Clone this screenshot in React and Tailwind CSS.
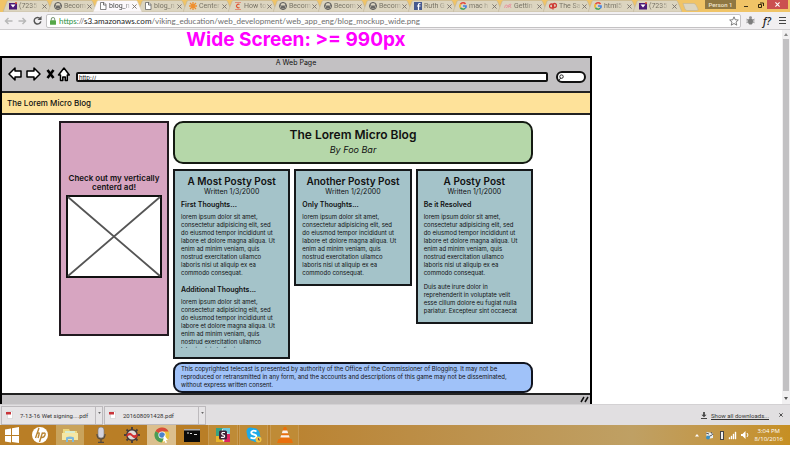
import React from "react";

const TABS = [
  { icon: "mail", label: "(7235" },
  { icon: "wp", label: "Becom" },
  { icon: "doc", label: "blog_n", active: true },
  { icon: "doc", label: "blog_n" },
  { icon: "star", label: "Center" },
  { icon: "c", label: "How to" },
  { icon: "wp", label: "Becom" },
  { icon: "wp", label: "Becom" },
  { icon: "wp", label: "Becom" },
  { icon: "fb", label: "Ruth G" },
  { icon: "g", label: "mac h" },
  { icon: "pink", label: "Gettin" },
  { icon: "red", label: "The Sa" },
  { icon: "g", label: "html5" },
  { icon: "mail", label: "(7235" },
];

const LOREM = [
  "lorem ipsum dolor sit amet,",
  "consectetur adipisicing elit, sed",
  "do eiusmod tempor incididunt ut",
  "labore et dolore magna aliqua. Ut",
  "enim ad minim veniam, quis",
  "nostrud exercitation ullamco",
  "laboris nisi ut aliquip ex ea",
  "commodo consequat.",
];

const DUIS = [
  "Duis aute irure dolor in",
  "reprehenderit in voluptate velit",
  "esse cillum dolore eu fugiat nulla",
  "pariatur. Excepteur sint occaecat",
];

function TabIcon({ kind }) {
  const p = { viewBox: "0 0 16 16", className: "h-2 w-2 shrink-0", "aria-hidden": true };
  switch (kind) {
    case "mail":
      return (
        <svg {...p}>
          <rect y="2" width="16" height="13" fill="#4b1a78" />
          <path d="M3 5h10l-5 6z" fill="#fff" />
          <circle cx="14" cy="2" r="2" fill="#e04b30" />
        </svg>
      );
    case "wp":
      return (
        <svg {...p}>
          <circle cx="8" cy="8" r="7" fill="#ddd6c4" stroke="#555" strokeWidth="2" />
          <path d="M3 5l3 8 2-6 2 6 3-8" fill="none" stroke="#555" strokeWidth="2" />
        </svg>
      );
    case "doc":
      return (
        <svg {...p}>
          <path d="M3 1h7l4 4v10H3z" fill="#fff" stroke="#666" strokeWidth="1.6" />
          <path d="M9 1v5h5" fill="none" stroke="#555" strokeWidth="1.6" />
        </svg>
      );
    case "star":
      return (
        <svg {...p}>
          <path d="M8 0v16M0 8h16M2 2l12 12M14 2L2 14" stroke="#ef8f2e" strokeWidth="2.6" />
        </svg>
      );
    case "c":
      return (
        <svg {...p}>
          <path d="M2 1h12M2 15h12" stroke="#e0705a" strokeWidth="1.4" />
          <path d="M11 5a4 3.5 0 1 0 0 6" fill="none" stroke="#e0502f" strokeWidth="2.4" />
        </svg>
      );
    case "fb":
      return (
        <svg {...p}>
          <rect width="16" height="16" fill="#46598f" />
          <path d="M13 3h-2q-2 0-2 2v11M6 8h7" fill="none" stroke="#fff" strokeWidth="2.4" />
        </svg>
      );
    case "g":
      return (
        <svg {...p} fill="none" strokeWidth="3">
          <path d="M13 4A6.200 6.200 0 0 0 3 4.500" stroke="#e2483b" />
          <path d="M3 4.500a6.200 6.200 0 0 0 0 7" stroke="#f0b51c" />
          <path d="M3 11.500a6.200 6.200 0 0 0 9.500 1" stroke="#3fa456" />
          <path d="M12.500 12.500Q14.500 11 14.200 8H8" stroke="#4680e0" />
        </svg>
      );
    case "pink":
      return (
        <svg {...p}>
          <path d="M1 12Q2 4 6 6t-2 6M8 12q1-9 5-8t-3 5q4-1 4 3" fill="none" stroke="#e69aa2" strokeWidth="2" />
        </svg>
      );
    default:
      return (
        <svg {...p} fill="none" stroke="#cf3b35" strokeWidth="2.6">
          <circle cx="5" cy="8" r="4" />
          <circle cx="11" cy="7" r="4" />
          <path d="M8 6v9" />
        </svg>
      );
  }
}

function Tab({ icon, label, active }) {
  return (
    <button
      className={
        "relative -mr-1 flex h-[12px] w-[49px] shrink-0 items-center font-[Roboto,sans-serif] text-[7px] leading-[10px] " +
        (active ? "z-10 text-[#444]" : "text-[#777264]")
      }
    >
      <svg viewBox="0 0 49 12" className="absolute inset-0 h-full w-full" aria-hidden="true">
        <path
          d="M0 12L4 1.500Q4.500 .5 5.500 .5H43Q44 .5 44.500 1.500L49 12z"
          fill={active ? "#fbf8fb" : "#dcd5c0"}
          stroke={active ? "#d9cfc0" : "#bfb498"}
          strokeWidth=".6"
        />
      </svg>
      <span className="relative flex w-full items-center pr-[5px] pl-[6px]">
        <TabIcon kind={icon} />
        <span className="ml-[2px] whitespace-nowrap [mask-image:linear-gradient(to_right,black_65%,rgba(0,0,0,0.2))]">
          {label}
        </span>
        <svg viewBox="0 0 6 6" className="ml-auto h-[5px] w-[5px] shrink-0" aria-hidden="true">
          <path d="M.5 .5l5 5M5.500 .5l-5 5" stroke="#77716a" strokeWidth="1.1" />
        </svg>
      </span>
    </button>
  );
}

function TabStrip() {
  return (
    <div className="flex h-[12px] shrink-0 items-stretch overflow-hidden bg-[#f0c467] pl-[3px]">
      {TABS.map((t, i) => (
        <Tab key={i} {...t} />
      ))}
      <button aria-label="New tab" className="mt-[3px] ml-[4px] h-[8px] w-[17px]">
        <svg viewBox="0 0 17 8" className="h-full w-full" aria-hidden="true">
          <path d="M1 .5h11q1 0 2 1.500l2 4q.5 1.500-1 1.500H5Q4 7.500 3 6z" fill="#dcd5c0" stroke="#bfb498" strokeWidth=".6" />
        </svg>
      </button>
      <div className="ml-auto flex h-[9px] items-stretch">
        <button className="w-[31px] bg-[#8f7742] text-center font-[Roboto,sans-serif] text-[6px] leading-[9px] font-medium text-[#f0e6cf]">
          Person 1
        </button>
        <button aria-label="Minimize" className="flex w-[19px] items-center justify-center pt-[3px]">
          <span className="h-[1px] w-[4px] bg-[#3a2f16]" />
        </button>
        <button aria-label="Restore" className="flex w-[12px] items-center justify-center">
          <svg viewBox="0 0 6 6" className="h-[6px] w-[6px]" fill="none" stroke="#33270d" aria-hidden="true">
            <path d="M.5 2.500h3v3h-3zM2 1h3.500v3" />
          </svg>
        </button>
        <button aria-label="Close" className="mr-[2px] flex w-[21px] items-center justify-center bg-[#cb5050]">
          <svg viewBox="0 0 6 6" className="h-[5px] w-[5px]" stroke="#fff" strokeWidth="1.3" aria-hidden="true">
            <path d="M.5 .5l5 5M5.500 .5l-5 5" />
          </svg>
        </button>
      </div>
    </div>
  );
}

function Toolbar() {
  return (
    <div className="flex h-[18px] shrink-0 items-center border-b border-[#cfcdcf] bg-[#f1eff1] pr-[4px] pl-[3px]">
      <button aria-label="Back" className="flex w-[10px] justify-center">
        <svg viewBox="0 0 9 8" className="h-2 w-[9px]" fill="none" stroke="#b8b8b8" strokeWidth="1.5" aria-hidden="true">
          <path d="M8.500 4H1.500M4.500 1L1.500 4l3 3" />
        </svg>
      </button>
      <button aria-label="Forward" className="ml-[4px] flex w-[10px] justify-center">
        <svg viewBox="0 0 9 8" className="h-2 w-[9px]" fill="none" stroke="#b8b8b8" strokeWidth="1.5" aria-hidden="true">
          <path d="M.5 4h7M4.500 1l3 3-3 3" />
        </svg>
      </button>
      <button aria-label="Reload" className="ml-[5px] flex w-[10px] justify-center">
        <svg viewBox="0 0 10 10" className="h-[9px] w-[9px]" aria-hidden="true">
          <path d="M8 3A3.700 3.700 0 1 0 8.700 6" fill="none" stroke="#555" strokeWidth="1.6" />
          <path d="M9.500 0v4.500H5z" fill="#555" />
        </svg>
      </button>
      <div className="ml-[4px] flex h-[14px] min-w-0 flex-1 items-center rounded-[2px] border border-[#c4c2c4] bg-white pl-[3px]">
        <svg viewBox="0 0 7 9" className="h-[8px] w-[6px] shrink-0" aria-hidden="true">
          <path d="M1.500 4V2.500a2 2 0 0 1 4 0V4" fill="none" stroke="#7d9a78" strokeWidth="1.2" />
          <rect y="3.500" width="7" height="5.500" rx=".8" fill="#55a848" />
        </svg>
        <span className="ml-[3px] font-[Lato,sans-serif] text-[8px] leading-3 whitespace-nowrap text-[#6d6d6d]">
          <span className="text-[#2e9344]">https</span>://<span className="text-[#222]">s3.amazonaws.com</span>
          /viking_education/web_development/web_app_eng/blog_mockup_wide.png
        </span>
        <button aria-label="Bookmark" className="mr-[1px] ml-auto">
          <svg viewBox="0 0 12 12" className="h-[10px] w-[10px]" aria-hidden="true">
            <path d="M6 1l1.500 3.500 3.700.3-2.800 2.500.9 3.700L6 9l-3.300 2 .9-3.700L.8 4.800l3.700-.3z" fill="none" stroke="#666" />
          </svg>
        </button>
      </div>
      <div className="flex w-[45px] shrink-0 items-center justify-between pl-[5px]">
        <button aria-label="Debug">
          <svg viewBox="0 0 9 10" className="h-[9px] w-[9px]" aria-hidden="true">
            <path d="M0 3.500l9 4M9 3.500l-9 4M0 5.500h9" stroke="#8a8a8a" />
            <ellipse cx="4.500" cy="6" rx="2.700" ry="3.500" fill="#7d7d7d" />
            <circle cx="4.500" cy="1.800" r="1.600" fill="#8d8d8d" />
          </svg>
        </button>
        <button className="font-['Open_Sans',sans-serif] text-[10px] leading-3 font-semibold text-[#222] italic">f?</button>
        <button aria-label="Menu" className="flex w-[7px] flex-col gap-[1px]">
          <span className="h-[1px] bg-[#444]" />
          <span className="my-[1px] h-[1px] bg-[#444]" />
          <span className="h-[1px] bg-[#444]" />
        </button>
      </div>
    </div>
  );
}

function Lines({ lines }) {
  return (
    <p className="text-[6px] leading-[8px] whitespace-nowrap">
      {lines.map((l) => (
        <span key={l} className="block">{l}</span>
      ))}
    </p>
  );
}

function Post({ title, date, children }) {
  return (
    <article className="min-w-0 flex-1 border-2 border-[#15181a] bg-[#a4c3c9] px-[6px] pt-1 pb-[7px]">
      <h2 className="text-center text-[10px] leading-3 font-semibold whitespace-nowrap">{title}</h2>
      <p className="mt-[1px] text-center text-[7px] leading-[8px]">{date}</p>
      {children}
    </article>
  );
}

function Section({ title }) {
  return <h3 className="mt-[5px] mb-1 text-[7px] leading-[8px] font-semibold">{title}</h3>;
}

function MockHeader() {
  return (
    <div className="border-b-2 border-[#222] bg-[#c3c1c3] pt-[1px] pb-2">
      <div className="text-center text-[7px] leading-[8px]">A Web Page</div>
      <div className="flex h-4 items-center pr-[4px] pl-[6px]">
        <svg viewBox="0 0 62 16" className="h-4 w-[62px] shrink-0" fill="#fff" stroke="#000" strokeWidth="1.5" strokeLinejoin="round" aria-hidden="true">
          <path d="M1 7l6-6v3h6v6H7v3z" />
          <path d="M32 7l-6-6v3h-7v6h7v3z" />
          <path d="M39.500 3l6 8M45.500 3l-6 8" strokeWidth="2.6" />
          <path d="M50.500 8L56 1l5.300 7h-2v5.500h-2V10h-2.500v3.500h-2.300V8z" />
        </svg>
        <input
          aria-label="Address"
          defaultValue="http://"
          className="mt-[4px] ml-[6px] h-[10px] min-w-0 flex-1 rounded-[2px] border-2 border-[#111] bg-white pl-[1px] text-[6px] leading-[6px]"
        />
        <label className="mt-[4px] ml-[8px] flex h-[12px] w-[30px] items-center rounded-[6px] border-2 border-[#111] bg-white">
          <svg viewBox="0 0 8 8" className="h-[7px] w-[7px] shrink-0" fill="none" stroke="#111" aria-hidden="true">
            <circle cx="4" cy="3" r="2" />
            <path d="M3 4.500L1 7.500" />
          </svg>
          <input aria-label="Search" className="w-full min-w-0 bg-transparent text-[6px] leading-[6px] outline-none" />
        </label>
      </div>
    </div>
  );
}

function Mockup() {
  return (
    <div className="flex w-full max-w-[592px] shrink-0 flex-col border-2 border-b-0 border-black bg-white">
      <MockHeader />
      <div className="border-b-2 border-[#222] bg-[#fee29a] px-[5px] text-[8px] leading-5 font-medium">The Lorem Micro Blog</div>
      <div className="flex items-start gap-1 px-[57px] pt-[6px]">
        <aside className="flex h-[215px] w-[110px] shrink-0 flex-col items-center border-2 border-[#221a20] bg-[#d7a5c1] pt-[51px]">
          <p className="text-center text-[8px] leading-[9px] font-semibold whitespace-nowrap">
            Check out my vertically
            <br />
            centerd ad!
          </p>
          <svg viewBox="0 0 96 83" className="mt-[3px] h-[83px] w-[96px]" aria-hidden="true">
            <rect x="1" y="1" width="94" height="81" fill="#fff" stroke="#111" strokeWidth="2" />
            <path d="M2 2l92 79M94 2L2 81" stroke="#555" strokeWidth="1.8" />
          </svg>
        </aside>
        <div className="min-w-0 flex-1">
          <header className="h-[43px] rounded-[10px] border-2 border-[#141a12] bg-[#b5d7a9] pt-[4px] text-center">
            <h1 className="text-[12px] leading-4 font-semibold">The Lorem Micro Blog</h1>
            <p className="text-[9px] leading-[13px] italic">By Foo Bar</p>
          </header>
          <div className="mt-[5px] flex items-start gap-1">
            <Post title="A Most Posty Post" date="Written 1/3/2000">
              <Section title="First Thoughts..." />
              <Lines lines={LOREM} />
              <div className="pt-1">
                <Section title="Additional Thoughts..." />
                <div className="mb-[2px] max-h-[50px] overflow-hidden">
                  <Lines lines={LOREM.slice(0, 7)} />
                </div>
              </div>
            </Post>
            <Post title="Another Posty Post" date="Written 1/2/2000">
              <Section title="Only Thoughts..." />
              <Lines lines={LOREM} />
            </Post>
            <Post title="A Posty Post" date="Written 1/1/2000">
              <Section title="Be it Resolved" />
              <Lines lines={LOREM} />
              <div className="pt-[6px]">
                <Lines lines={DUIS} />
              </div>
            </Post>
          </div>
          <footer className="mt-[3px] rounded-[9px] border-2 border-[#10141f] bg-[#a0c2f9] px-[6px] pt-[1px] pb-[2px] text-[6px] leading-[8px] whitespace-nowrap">
            This copyrighted telecast is presented by authority of the Office of the Commissioner of Blogging. It may not be
            <br />
            reproduced or retransmitted in any form, and the accounts and descriptions of this game may not be disseminated,
            <br />
            without express written consent.
          </footer>
        </div>
      </div>
      <div className="flex h-5 justify-end border-t-2 border-[#222] bg-[#c3c1c3] pt-[1px] pr-[1px]">
        <svg viewBox="0 0 9 7" className="h-[7px] w-[9px]" stroke="#111" strokeWidth="1.5" aria-hidden="true">
          <path d="M1 6l3-5M5 6l3-5" />
        </svg>
      </div>
    </div>
  );
}

function Download({ name }) {
  return (
    <div className="flex h-[19px] w-[102px] items-stretch border border-[#bdbabd] bg-[#e6e4e6]">
      <button className="flex flex-1 items-center pl-[4px] font-[Roboto,sans-serif] text-[6px] leading-[9px] whitespace-nowrap text-[#333]">
        <svg viewBox="0 0 7 8" className="h-[8px] w-[7px]" aria-hidden="true">
          <path d="M1.500 .5h5v7h-5z" fill="#fff" stroke="#ccc" strokeWidth=".6" />
          <path d="M0 1h5v2.500H0z" fill="#c9343a" />
        </svg>
        <span className="ml-[7px]">{name}</span>
      </button>
      <button aria-label="Download options" className="flex w-[7px] justify-center border-l border-[#bdbabd] pt-[5px]">
        <svg viewBox="0 0 4 3" className="h-[2px] w-[3px]" aria-hidden="true">
          <path d="M0 0h4L2 3z" fill="#666" />
        </svg>
      </button>
    </div>
  );
}

function DownloadBar() {
  return (
    <div className="flex h-[21px] shrink-0 items-center gap-px border-t border-[#d3d1d3] bg-[#e1dfe1] pr-[7px] pl-[1px]">
      <Download name="7-13-16 Wet signing....pdf" />
      <Download name="201608091428.pdf" />
      <svg viewBox="0 0 7 8" className="ml-auto h-[7px] w-[6px]" aria-hidden="true">
        <path d="M2.500 0h2v3h2l-3 3-3-3h2zM0 7h7v1H0z" fill="#444" />
      </svg>
      <a href="#downloads" className="ml-[3px] font-[Roboto,sans-serif] text-[6px] leading-[9px] text-[#333] underline">
        Show all downloads...
      </a>
      <button aria-label="Close downloads" className="ml-[9px]">
        <svg viewBox="0 0 6 6" className="h-[4px] w-[4px]" stroke="#444" strokeWidth="1.4" aria-hidden="true">
          <path d="M.5 .5l5 5M5.500 .5l-5 5" />
        </svg>
      </button>
    </div>
  );
}

const APPS = [
  {
    name: "Start",
    box: "w-[23px]",
    art: <path d="M1 2.500l6-1v6.500H1zM8 1.300L15 0v8H8zM1 9h6v6.500l-6-1zM8 9h7v7l-7-1z" fill="#fff" />,
  },
  {
    name: "HP",
    box: "w-[33px]",
    art: (
      <g>
        <circle cx="8" cy="8" r="8" fill="#fff" />
        <path d="M7 1L3.500 11M5 6.500q3-1.500 2 1L6 11M10.500 5.500L7.500 15M10 6.500q4-1.500 3 1.500t-4 2.500" fill="none" stroke="#b98533" strokeWidth="1.4" />
      </g>
    ),
  },
  {
    name: "File Explorer",
    box: "w-[28px] bg-[#c9a35c]",
    art: (
      <g>
        <path d="M1 2h6l1 2h7v9H1z" fill="#eed77d" />
        <path d="M3 4h10v3H3z" fill="#d7ecd0" />
        <path d="M0 6h16v7H0z" fill="#f5e7a4" />
        <path d="M4 15v-4q0-1.500 4-1.500t4 1.500v4h-2v-3H6v3z" fill="#7eb8dc" />
      </g>
    ),
  },
  {
    name: "Voice recorder",
    box: "w-[33px]",
    art: (
      <g>
        <path d="M4 7q0 5 4 5t4-5M8 12v3M5 15.500h6" fill="none" stroke="#554b40" strokeWidth="1.3" />
        <rect x="5" width="6" height="11" rx="3" fill="#d4d3de" stroke="#777" strokeWidth=".6" />
      </g>
    ),
  },
  {
    name: "Ship wheel",
    box: "w-[30px]",
    art: (
      <g>
        <path d="M8 0v16M0 8h16M2.500 2.500l11 11M13.500 2.500l-11 11" stroke="#4b413b" strokeWidth="2" />
        <circle cx="8" cy="8" r="5.200" fill="#e0ddd8" stroke="#4a3c37" strokeWidth="1.5" />
        <path d="M2.500 8q3-4 5.500-1t5.500-1v3.500q-3 3-5.500 0t-5.500 1z" fill="#d33030" />
      </g>
    ),
  },
  {
    name: "Chrome",
    box: "w-[29px] bg-[#dbbf8e]",
    art: (
      <g>
        <circle cx="8" cy="8" r="7.500" fill="#e9c43e" />
        <path d="M8 8L1.500 4.200A7.500 7.500 0 0 1 14.600 4.500H8z" fill="#d84b3c" />
        <path d="M8 8L1.500 4.200A7.500 7.500 0 0 0 7.500 15.500L11 10z" fill="#4a9c56" />
        <circle cx="8" cy="8" r="3.600" fill="#fff" />
        <circle cx="8" cy="8" r="2.800" fill="#4a82cc" />
        <path d="M10 8l4 5-2 .3 1 2.200-1.500.5-1-2L9 15z" fill="#fff" />
      </g>
    ),
  },
  {
    name: "Command Prompt",
    box: "w-[32px]",
    art: (
      <g>
        <rect y="2" width="16" height="13" fill="#0b0b0b" />
        <path d="M0 2h16v1.500H0z" fill="#aaa" />
        <path d="M3 6h2M6 7l1-1 1 1M10 7.500h3" stroke="#ddd" fill="none" />
      </g>
    ),
  },
  {
    name: "Slack",
    box: "w-[30px] border-x border-[#c79a52] bg-[#bf8b36]",
    art: (
      <g>
        <rect x="1" y="1" width="14" height="14" fill="#fff" />
        <path d="M1 1h7l-4 8H1z" fill="#35a384" />
        <path d="M8 1h7v6l-7-2z" fill="#6ecadc" />
        <path d="M15 7v8H9l2-8z" fill="#df2560" />
        <path d="M1 9h3l5 6H1z" fill="#e7b52d" />
        <rect x="4" y="3.500" width="8" height="9" rx="1.500" fill="#402338" />
        <path d="M10 5.500H7.500q-1.500 1.500 0 2.300 2.500 0 2 2-1 1-3.500.5" fill="none" stroke="#fff" strokeWidth="1.2" />
      </g>
    ),
  },
  {
    name: "Skype",
    box: "ml-[1px] w-[29px] border-x border-[#c79a52] bg-[#bf8b36]",
    art: (
      <g>
        <circle cx="4.500" cy="4.500" r="4" fill="#1daae8" />
        <circle cx="10" cy="10.500" r="4.500" fill="#1daae8" />
        <circle cx="7.500" cy="7.500" r="6.500" fill="#1daae8" />
        <path d="M10.500 4.500Q7 2.500 5.300 5q-.3 2 2.500 2.500t2.500 2.500Q8 12.500 4.500 10.500" fill="none" stroke="#fff" strokeWidth="1.8" />
        <circle cx="12.500" cy="12.500" r="3" fill="#f1c543" />
        <path d="M12.500 11v2h1.500" fill="none" stroke="#745" />
      </g>
    ),
  },
  {
    name: "VLC",
    box: "ml-[2px] w-[29px] border-x border-[#c79a52] bg-[#bf8b36]",
    art: (
      <g>
        <path d="M6.800 0h2.400l4 12.500H2.800z" fill="#ea6f0c" />
        <path d="M5.700 3.500h4.600l.9 2.700H4.800zM4.100 8.300h7.800l.7 2.200H3.400z" fill="#f8f2ea" />
        <path d="M1.500 12h13l1.500 4H0z" fill="#ea6f0c" />
      </g>
    ),
  },
];

function Taskbar() {
  return (
    <div className="flex h-5 shrink-0 items-stretch bg-gradient-to-r from-[#b97e26] from-30% via-[#bfa064] via-80% to-[#c68f22]">
      {APPS.map((a) => (
        <button key={a.name} aria-label={a.name} className={"flex shrink-0 items-center justify-center " + a.box}>
          <svg viewBox="0 0 16 16" className="h-4 w-4" aria-hidden="true">{a.art}</svg>
        </button>
      ))}
      <div className="mr-[7px] ml-auto flex items-center">
        <svg viewBox="0 0 54 10" className="h-[10px] w-[54px]" aria-hidden="true">
          <path d="M0 6.500l2-2.500 2 2.500z" fill="#fff" />
          <path d="M11 2l7 1v5l-6 1z" fill="#e9eef0" />
          <path d="M11 3l3 1M16 2l2 3M13 7l4-2" stroke="#555" />
          <circle cx="13" cy="7.500" r="2" fill="#3a8fc0" />
          <rect x="25.500" y="1.500" width="3" height="8" fill="#eee" stroke="#444" />
          <path d="M34 9V7.500h1V9zM36 9V6h1v3zM38 9V4h1v5zM40 9V2h1v7z" fill="#fff" stroke="#fff" strokeWidth=".4" />
          <path d="M46 4h1.500l3-3v8l-3-3H46z" fill="#fff" />
          <path d="M52 3q2 2 0 4" stroke="#fff" fill="none" />
        </svg>
        <div className="ml-[6px] text-center text-[6px] leading-[8px] whitespace-nowrap text-white">
          3:04 PM
          <br />
          8/10/2016
        </div>
      </div>
    </div>
  );
}

export default function App() {
  return (
    <div className="h-screen bg-white pr-[9px] pb-2 font-['Open_Sans',sans-serif]">
      <div className="flex h-full flex-col overflow-hidden">
        <TabStrip />
        <Toolbar />
        <div className="flex min-h-0 flex-1">
          <main className="flex min-w-0 flex-1 flex-col overflow-hidden font-[Inter,sans-serif] text-[#111]">
            <h1 className="max-w-[592px] shrink-0 pb-[6px] text-center text-[19px] leading-5 font-bold text-[#ff00ff]">
              Wide Screen: &gt;= 990px
            </h1>
            <Mockup />
          </main>
          <div className="flex w-[8px] flex-col items-center bg-[#f1f0f1]" aria-hidden="true">
            <svg viewBox="0 0 4 3" className="my-[3px] h-[3px] w-[4px]">
              <path d="M0 3h4L2 0z" fill="#888" />
            </svg>
            <div className="w-[6px] flex-1 bg-[#c2c1c3]" />
            <svg viewBox="0 0 4 3" className="mt-[6px] mb-[4px] h-[3px] w-[4px]">
              <path d="M0 0h4L2 3z" fill="#555" />
            </svg>
          </div>
        </div>
        <DownloadBar />
        <Taskbar />
      </div>
    </div>
  );
}
